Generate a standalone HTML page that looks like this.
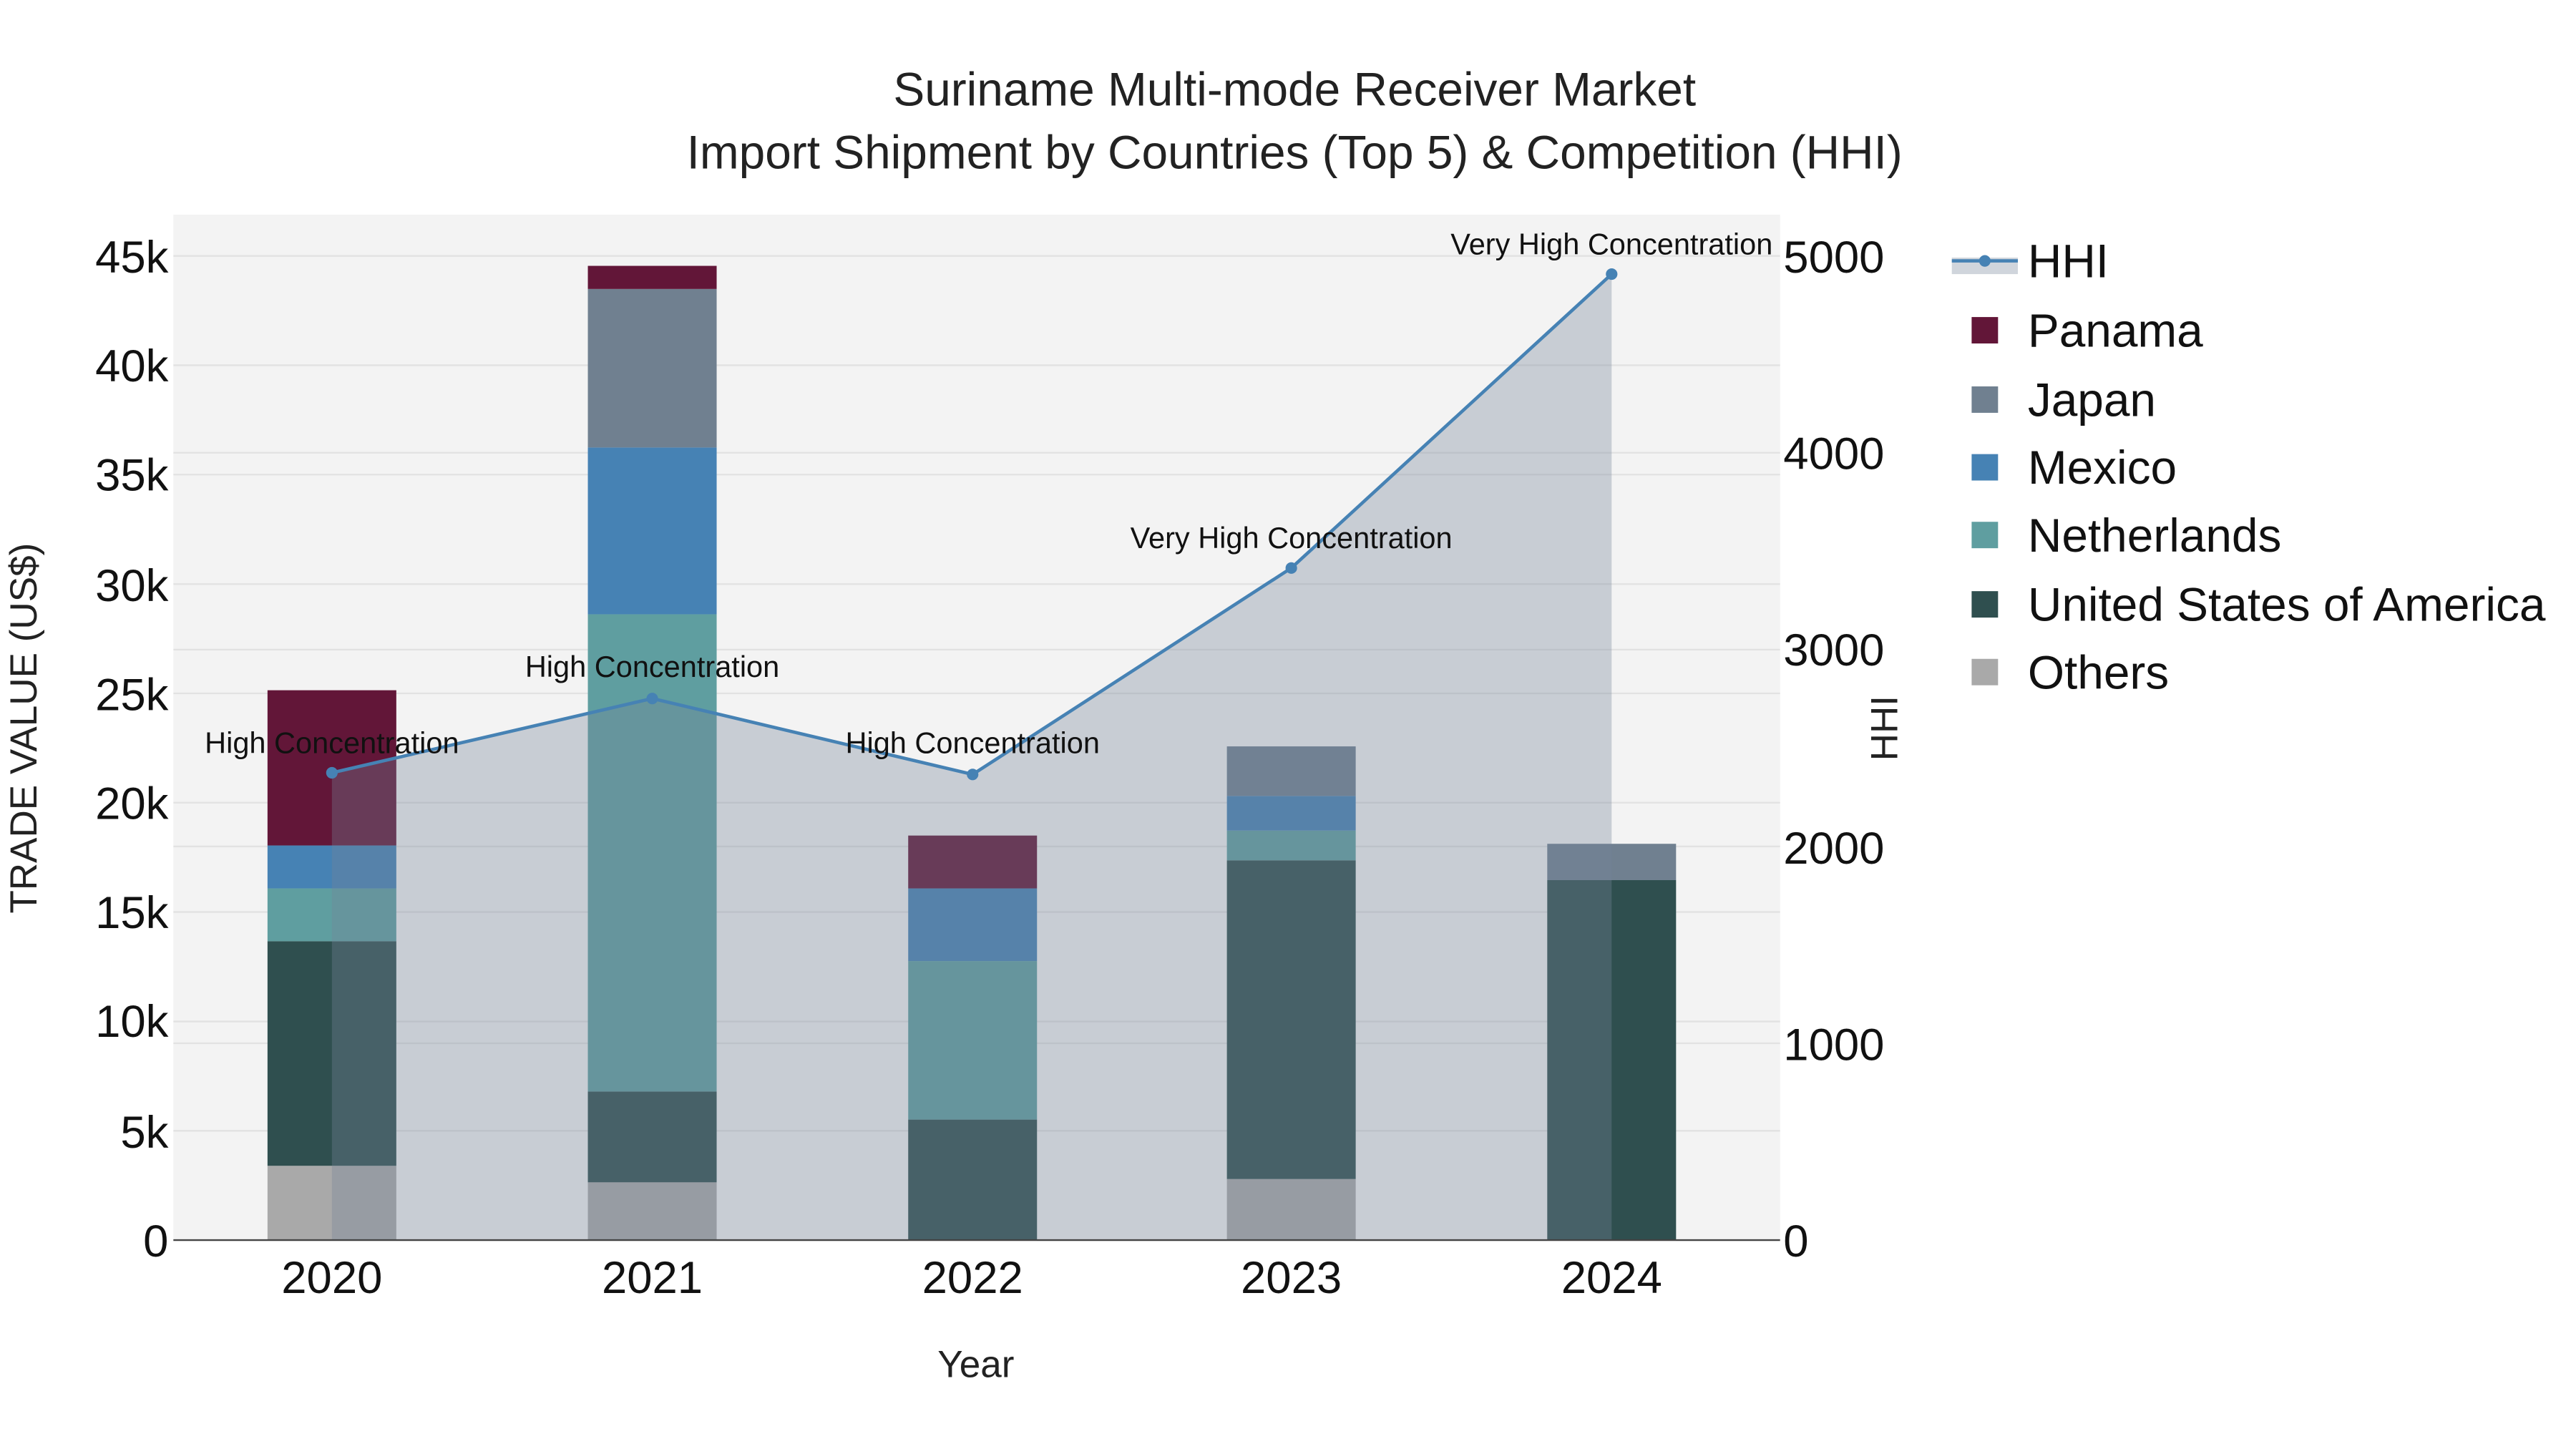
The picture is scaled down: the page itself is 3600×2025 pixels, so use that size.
<!DOCTYPE html>
<html><head><meta charset="utf-8"><style>
html,body{margin:0;padding:0;background:#fff;}
svg{display:block;font-family:"Liberation Sans",Arial,sans-serif;}
</style></head><body>
<svg width="3600" height="2025" viewBox="0 0 1560 877.5" xmlns="http://www.w3.org/2000/svg">
<rect width="1560" height="877.5" fill="#fff"/>
<rect x="105" y="130" width="973" height="621" fill="#f3f3f3"/>
<g stroke="#e2e2e2" stroke-width="1">
<line x1="105" x2="1078" y1="684.8" y2="684.8"/><line x1="105" x2="1078" y1="618.6" y2="618.6"/>
<line x1="105" x2="1078" y1="552.3" y2="552.3"/><line x1="105" x2="1078" y1="486.1" y2="486.1"/>
<line x1="105" x2="1078" y1="419.9" y2="419.9"/><line x1="105" x2="1078" y1="353.7" y2="353.7"/>
<line x1="105" x2="1078" y1="287.4" y2="287.4"/><line x1="105" x2="1078" y1="221.2" y2="221.2"/>
<line x1="105" x2="1078" y1="155" y2="155"/>
<line x1="105" x2="1078" y1="631.8" y2="631.8"/><line x1="105" x2="1078" y1="512.6" y2="512.6"/>
<line x1="105" x2="1078" y1="393.4" y2="393.4"/><line x1="105" x2="1078" y1="274.2" y2="274.2"/>
</g>
<g>
<rect x="162" y="706" width="78" height="45" fill="#a9a9a9"/>
<rect x="162" y="570" width="78" height="136" fill="#2f4f4f"/>
<rect x="162" y="538" width="78" height="32" fill="#5f9ea0"/>
<rect x="162" y="512" width="78" height="26" fill="#4682b4"/>
<rect x="162" y="418" width="78" height="94" fill="#621638"/>

<rect x="356" y="716" width="78" height="35" fill="#a9a9a9"/>
<rect x="356" y="661" width="78" height="55" fill="#2f4f4f"/>
<rect x="356" y="372" width="78" height="289" fill="#5f9ea0"/>
<rect x="356" y="271" width="78" height="101" fill="#4682b4"/>
<rect x="356" y="175" width="78" height="96" fill="#708090"/>
<rect x="356" y="161" width="78" height="14" fill="#621638"/>

<rect x="550" y="678" width="78" height="73" fill="#2f4f4f"/>
<rect x="550" y="582" width="78" height="96" fill="#5f9ea0"/>
<rect x="550" y="538" width="78" height="44" fill="#4682b4"/>
<rect x="550" y="506" width="78" height="32" fill="#621638"/>

<rect x="743" y="714" width="78" height="37" fill="#a9a9a9"/>
<rect x="743" y="521" width="78" height="193" fill="#2f4f4f"/>
<rect x="743" y="503" width="78" height="18" fill="#5f9ea0"/>
<rect x="743" y="482" width="78" height="21" fill="#4682b4"/>
<rect x="743" y="452" width="78" height="30" fill="#708090"/>

<rect x="937" y="533" width="78" height="218" fill="#2f4f4f"/>
<rect x="937" y="511" width="78" height="22" fill="#708090"/>
</g>
<polygon points="201,751 201,468 395,423 589,469 782,344 976,166 976,751" fill="rgba(117,131,152,0.34)"/>
<polyline points="201,468 395,423 589,469 782,344 976,166" fill="none" stroke="#4682b4" stroke-width="2"/>
<g fill="#4682b4"><circle cx="201" cy="468" r="3.5"/><circle cx="395" cy="423" r="3.5"/><circle cx="589" cy="469" r="3.5"/><circle cx="782" cy="344" r="3.5"/><circle cx="976" cy="166" r="3.5"/></g>
<line x1="105" x2="1078" y1="751" y2="751" stroke="#444" stroke-width="1"/>
<g font-size="18" fill="#111" text-anchor="middle">
<text x="201" y="456">High Concentration</text>
<text x="395" y="410">High Concentration</text>
<text x="589" y="456">High Concentration</text>
<text x="782" y="332">Very High Concentration</text>
<text x="976" y="154">Very High Concentration</text>
</g>
<g font-size="28.5" fill="#222" text-anchor="middle">
<text x="784" y="64">Suriname Multi-mode Receiver Market</text>
<text x="784" y="102">Import Shipment by Countries (Top 5) &amp; Competition (HHI)</text>
</g>
<g font-size="27.5" fill="#111" text-anchor="end">
<text x="102" y="761">0</text><text x="102" y="695">5k</text><text x="102" y="628">10k</text>
<text x="102" y="562">15k</text><text x="102" y="496">20k</text><text x="102" y="430">25k</text>
<text x="102" y="364">30k</text><text x="102" y="297">35k</text><text x="102" y="231">40k</text>
<text x="102" y="165">45k</text>
</g>
<g font-size="27.5" fill="#111" text-anchor="start">
<text x="1080" y="761">0</text><text x="1080" y="642">1000</text><text x="1080" y="523">2000</text>
<text x="1080" y="403">3000</text><text x="1080" y="284">4000</text><text x="1080" y="165">5000</text>
</g>
<g font-size="27.5" fill="#111" text-anchor="middle">
<text x="201" y="783">2020</text><text x="395" y="783">2021</text><text x="589" y="783">2022</text>
<text x="782" y="783">2023</text><text x="976" y="783">2024</text>
</g>
<text x="591" y="834" font-size="23" fill="#222" text-anchor="middle">Year</text>
<text transform="translate(22,441) rotate(-90)" font-size="23" fill="#222" text-anchor="middle">TRADE VALUE (US$)</text>
<text transform="translate(1149,441) rotate(-90)" font-size="23" fill="#222" text-anchor="middle">HHI</text>
<g>
<rect x="1182" y="156" width="40" height="10" fill="rgba(117,131,152,0.34)"/>
<line x1="1182" x2="1222" y1="158" y2="158" stroke="#4682b4" stroke-width="2"/>
<circle cx="1202" cy="158" r="3.5" fill="#4682b4"/>
<rect x="1194" y="192" width="16" height="16" fill="#621638"/>
<rect x="1194" y="234" width="16" height="16" fill="#708090"/>
<rect x="1194" y="275" width="16" height="16" fill="#4682b4"/>
<rect x="1194" y="316" width="16" height="16" fill="#5f9ea0"/>
<rect x="1194" y="358" width="16" height="16" fill="#2f4f4f"/>
<rect x="1194" y="399" width="16" height="16" fill="#a9a9a9"/>
</g>
<g font-size="28.5" fill="#111">
<text x="1228" y="168">HHI</text>
<text x="1228" y="210">Panama</text>
<text x="1228" y="252">Japan</text>
<text x="1228" y="293">Mexico</text>
<text x="1228" y="334">Netherlands</text>
<text x="1228" y="376">United States of America</text>
<text x="1228" y="417">Others</text>
</g>
</svg>
</body></html>
